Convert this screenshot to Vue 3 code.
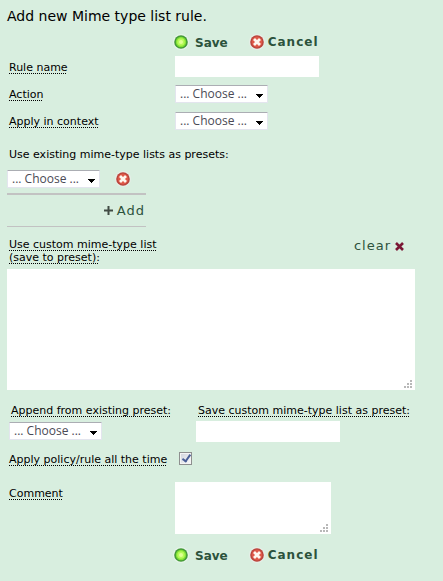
<script setup>
  import { ref } from 'vue';

  const name = ref('');
  const action = ref('');
  const context = ref('');
  const presets = ref(['']);
  const customList = ref('');
  const appendPreset = ref('');
  const presetName = ref('');
  const always = ref(true);
  const comment = ref('');
</script>

<template>
  <form class="rule" @submit.prevent>
    <h1>Add new Mime type list rule.</h1>

    <div class="actions">
      <button type="submit" class="actions__save">
        <svg class="icon" viewBox="0 0 16 16">
          <circle cx="8" cy="8" r="8" fill="#e6f3ea" />
          <circle cx="8" cy="8" r="6.8" fill="#459b38" />
          <circle cx="8" cy="8" r="5.2" fill="#83e334" />
          <circle cx="8" cy="8" r="3.8" fill="#b5fa58" />
          <circle cx="8" cy="8" r="2" fill="#e0ff94" />
        </svg>
        <span>Save</span>
      </button>
      <button type="button" class="actions__cancel">
        <svg class="icon" viewBox="0 0 16 16">
          <circle cx="8" cy="8" r="8" fill="#e6eee7" />
          <circle cx="8" cy="8" r="6.8" fill="#b9443c" />
          <circle cx="8" cy="8" r="5.4" fill="#de5848" />
          <path d="M5 5l6 6M11 5l-6 6" stroke="#fff6ee" stroke-width="2.8" />
        </svg>
        <span>Cancel</span>
      </button>
    </div>

    <div class="row">
      <label class="hint" for="name">Rule name</label>
      <input type="text" id="name" class="text" v-model="name">
    </div>

    <div class="row">
      <label class="hint" for="action">Action</label>
      <div class="select">
        <select id="action" v-model="action"><option value="">... Choose ...</option></select>
        <svg viewBox="0 0 7 4"><path d="M0 0h7v1h-1v1h-1v1h-1v1h-1v-1h-1v-1h-1v-1h-1z" /></svg>
      </div>
    </div>

    <div class="row">
      <label class="hint" for="context">Apply in context</label>
      <div class="select">
        <select id="context" v-model="context"><option value="">... Choose ...</option></select>
        <svg viewBox="0 0 7 4"><path d="M0 0h7v1h-1v1h-1v1h-1v1h-1v-1h-1v-1h-1v-1h-1z" /></svg>
      </div>
    </div>

    <label class="presets-title" for="preset-0">Use existing mime-type lists as presets:</label>
    <div class="presets">
      <div class="presets__item" v-for="(preset, i) in presets" :key="i">
        <div class="select">
          <select :id="'preset-' + i" v-model="presets[i]"><option value="">... Choose ...</option></select>
          <svg viewBox="0 0 7 4"><path d="M0 0h7v1h-1v1h-1v1h-1v1h-1v-1h-1v-1h-1v-1h-1z" /></svg>
        </div>
        <button type="button" aria-label="Remove" @click="presets.splice(i, 1)">
          <svg class="icon" viewBox="0 0 16 16">
            <circle cx="8" cy="8" r="8" fill="#e6eee7" />
            <circle cx="8" cy="8" r="6.8" fill="#b9443c" />
            <circle cx="8" cy="8" r="5.4" fill="#de5848" />
            <path d="M5 5l6 6M11 5l-6 6" stroke="#fff6ee" stroke-width="2.8" />
          </svg>
        </button>
      </div>
      <button type="button" class="presets__add" @click="presets.push('')">
        <svg viewBox="0 0 9 9"><path d="M4.5 0v9M0 4.5h9" stroke="#414b44" stroke-width="2" /></svg>
        <span>Add</span>
      </button>
    </div>

    <div class="custom-head">
      <label class="hint" for="custom">Use custom mime-type list<br>(save to preset):</label>
      <button type="button" class="clear" @click="customList = ''">
        <span>clear</span>
        <svg viewBox="0 0 9 9"><path d="M1 1l7 7M8 1l-7 7" stroke="#7a1735" stroke-width="2.6" /></svg>
      </button>
    </div>
    <div class="area area--custom">
      <textarea id="custom" v-model="customList"></textarea>
      <svg class="grip" viewBox="0 0 8 8"><path d="M6 0h2v2h-2zM3 3h2v2h-2zM6 3h2v2h-2zM0 6h2v2h-2zM3 6h2v2h-2zM6 6h2v2h-2z" /></svg>
    </div>

    <div class="preset-fields">
      <div class="preset-fields__append">
        <label class="hint" for="append">Append from existing preset:</label>
        <div class="select">
          <select id="append" v-model="appendPreset"><option value="">... Choose ...</option></select>
          <svg viewBox="0 0 7 4"><path d="M0 0h7v1h-1v1h-1v1h-1v1h-1v-1h-1v-1h-1v-1h-1z" /></svg>
        </div>
      </div>
      <div class="preset-fields__save">
        <label class="hint" for="preset-name">Save custom mime-type list as preset:</label>
        <input type="text" id="preset-name" class="text" v-model="presetName">
      </div>
    </div>

    <div class="row row--check">
      <label class="hint" for="always">Apply policy/rule all the time</label>
      <input type="checkbox" id="always" v-model="always">
    </div>

    <div class="row row--comment">
      <label class="hint" for="comment">Comment</label>
      <div class="area">
        <textarea id="comment" v-model="comment"></textarea>
        <svg class="grip" viewBox="0 0 8 8"><path d="M6 0h2v2h-2zM3 3h2v2h-2zM6 3h2v2h-2zM0 6h2v2h-2zM3 6h2v2h-2zM6 6h2v2h-2z" /></svg>
      </div>
    </div>

    <div class="actions">
      <button type="submit" class="actions__save">
        <svg class="icon" viewBox="0 0 16 16">
          <circle cx="8" cy="8" r="8" fill="#e6f3ea" />
          <circle cx="8" cy="8" r="6.8" fill="#459b38" />
          <circle cx="8" cy="8" r="5.2" fill="#83e334" />
          <circle cx="8" cy="8" r="3.8" fill="#b5fa58" />
          <circle cx="8" cy="8" r="2" fill="#e0ff94" />
        </svg>
        <span>Save</span>
      </button>
      <button type="button" class="actions__cancel">
        <svg class="icon" viewBox="0 0 16 16">
          <circle cx="8" cy="8" r="8" fill="#e6eee7" />
          <circle cx="8" cy="8" r="6.8" fill="#b9443c" />
          <circle cx="8" cy="8" r="5.4" fill="#de5848" />
          <path d="M5 5l6 6M11 5l-6 6" stroke="#fff6ee" stroke-width="2.8" />
        </svg>
        <span>Cancel</span>
      </button>
    </div>
  </form>
</template>

<style>
  body {
    background: #d8eedf;
  }
</style>

<style scoped>
  .rule {
    padding: 8px 28px 16px 7px;
    font-family: Verdana, "DejaVu Sans", sans-serif;
    font-size: 11px;
    line-height: 13px;
    color: #000;
  }

  h1 {
    margin: 0 0 10px;
    font-size: 14px;
    font-weight: 400;
    line-height: 16px;
  }

  button {
    display: flex;
    align-items: center;
    padding: 0;
    border: none;
    background: none;
    font: inherit;
    color: #2c523c;
    cursor: pointer;
  }

  svg {
    display: block;
    flex: none;
  }

  .icon {
    width: 16px;
    height: 16px;
  }

  .actions {
    display: flex;
    gap: 21px;
    padding-left: 166px;
    height: 16px;
  }

    .actions button {
      gap: 6px;
      font-size: 12px;
      font-weight: 700;
      line-height: 16px;
    }

    .actions .actions__save span {
      padding-top: 2px;
    }

    .actions .actions__cancel {
      gap: 3px;
      letter-spacing: 1px;
    }

  .hint {
    text-decoration: underline dotted 1px;
    text-underline-offset: 2px;
    text-decoration-skip-ink: none;
    white-space: nowrap;
  }

  .row {
    display: grid;
    grid-template-columns: 166px 1fr;
    align-items: center;
    height: 27px;
    padding-left: 2px;
  }

    .row label {
      padding-top: 2px;
    }

    .row .text,
    .row .select {
      justify-self: start;
    }

  .actions + .row {
    margin-top: 3px;
  }

  .text {
    box-sizing: border-box;
    width: 144px;
    height: 21px;
    padding: 0 4px;
    border: none;
    background: #fff;
    font: inherit;
  }

  .select {
    position: relative;
    width: 93px;
    height: 18px;
  }

    .select select {
      display: block;
      box-sizing: border-box;
      width: 100%;
      height: 100%;
      padding: 0 0 0 4px;
      border: 1px solid #e3e5ee;
      border-top-color: #abadb3;
      border-radius: 1px;
      background: #fff;
      appearance: none;
      font: 12px "Open Sans", sans-serif;
      line-height: 14px;
      color: #4a4a55;
    }

    .select svg {
      position: absolute;
      right: 5px;
      bottom: 5px;
      width: 7px;
      height: 4px;
      pointer-events: none;
    }

  .presets-title {
    display: block;
    margin: 14px 0 9px 2px;
  }

  .presets {
    width: 139px;
    border-bottom: 1px solid #c2c2c2;
  }

    .presets__item {
      display: flex;
      align-items: center;
      gap: 15px;
      padding-bottom: 5px;
      border-bottom: 2px solid #c2c2c2;
    }

    .presets .presets__add {
      gap: 4px;
      height: 31px;
      margin-left: auto;
      padding-right: 1px;
      font-size: 13px;
      letter-spacing: 1px;
    }

    .presets__add svg {
      width: 9px;
      height: 9px;
    }

  .custom-head {
    display: flex;
    justify-content: space-between;
    align-items: flex-start;
    margin: 11px 11px 5px 2px;
  }

  .clear {
    gap: 4px;
    font-size: 13px;
    line-height: 16px;
    letter-spacing: 1px;
  }

    .clear svg {
      width: 9px;
      height: 9px;
    }

  .area {
    position: relative;
    width: 156px;
    height: 52px;
  }

    .area textarea {
      display: block;
      box-sizing: border-box;
      width: 100%;
      height: 100%;
      padding: 4px;
      border: none;
      background: #fff;
      font: inherit;
      resize: none;
    }

  .area--custom {
    width: 100%;
    height: 121px;
  }

  .grip {
    position: absolute;
    right: 3px;
    bottom: 2px;
    width: 8px;
    height: 8px;
    fill: #b8b8b8;
    pointer-events: none;
  }

  .preset-fields {
    display: flex;
    gap: 22px;
    margin: 14px 0 3px 2px;
  }

    .preset-fields__append .select {
      margin-top: 5px;
    }

    .preset-fields label {
      display: block;
      padding-left: 2px;
    }

    .preset-fields__append {
      width: 165px;
    }

    .preset-fields__save .text {
      display: block;
      margin-top: 4px;
    }

  .row--check {
    grid-template-columns: 170px 1fr;
  }

    .row--check input {
      position: relative;
      box-sizing: border-box;
      width: 13px;
      height: 13px;
      margin: 0;
      border: 1px solid #8e8f8f;
      background: linear-gradient(135deg, #cfd3dc, #fafafa);
      box-shadow: inset 0 0 0 1px #f4f4f4;
      appearance: none;
    }

    .row--check input:checked::after {
      content: "";
      position: absolute;
      left: 4px;
      top: 0;
      width: 3px;
      height: 7px;
      border: solid #4a5f97;
      border-width: 0 2px 2px 0;
      transform: rotate(35deg);
    }

  .row--comment {
    align-items: start;
    height: auto;
    margin: 10px 0 13px;
  }

    .row--comment label {
      padding-top: 5px;
    }
</style>
